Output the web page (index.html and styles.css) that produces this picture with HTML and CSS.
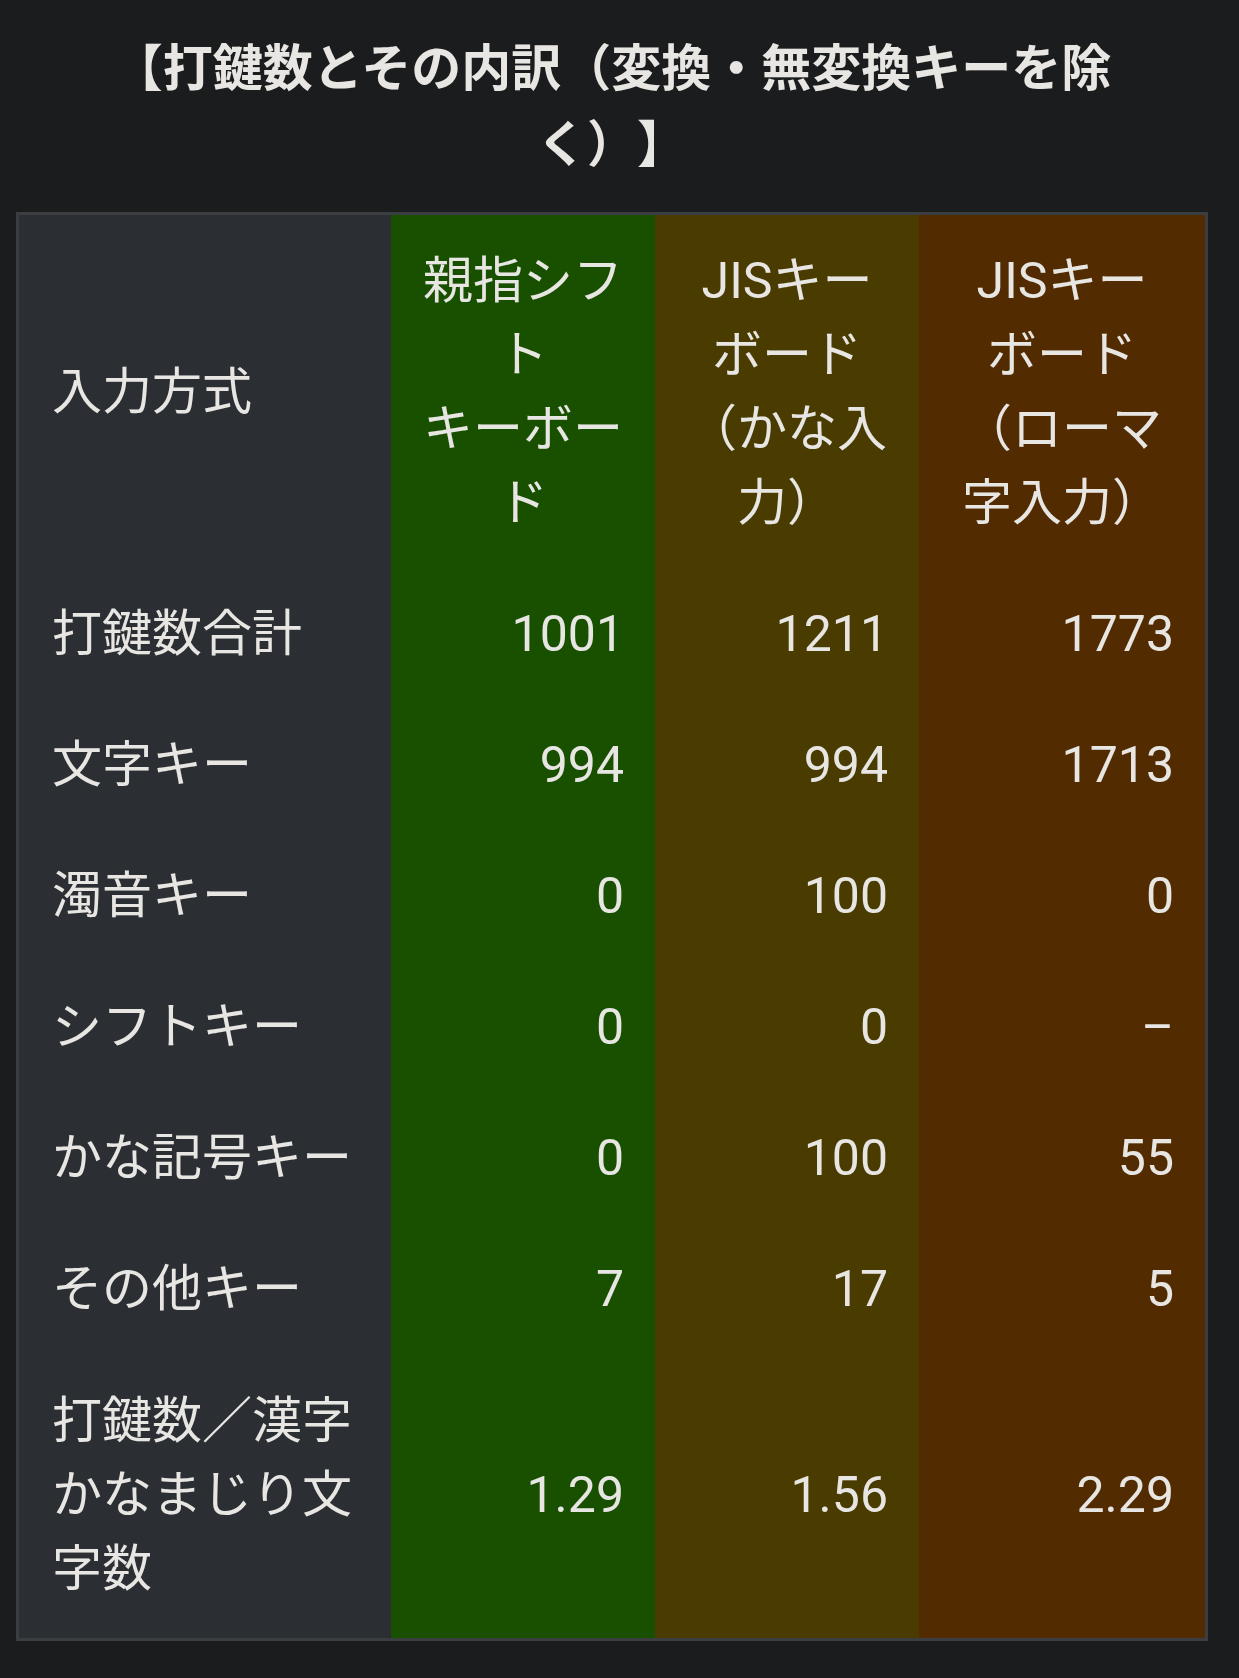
FILE: index.html
```html
<!DOCTYPE html>
<html lang="ja">
<head>
<meta charset="utf-8">
<title>打鍵数とその内訳</title>
<link rel="stylesheet" href="styles.css">
</head>
<body>
<h2 class="title">【打鍵数とその内訳（変換・無変換キーを除く）】</h2>
<div class="table-wrap">
<table class="stats">
<colgroup>
<col class="c-label">
<col class="c-oya">
<col class="c-kana">
<col class="c-roma">
</colgroup>
<thead>
<tr>
<th class="label">入力方式</th>
<th class="oya">親指シフ<br>ト<br>キーボー<br>ド</th>
<th class="kana">JISキー<br>ボード<br>（かな入<br>力）</th>
<th class="roma">JISキー<br>ボード<br>（ローマ<br>字入力）</th>
</tr>
</thead>
<tbody>
<tr><td class="label">打鍵数合計</td><td class="oya">1001</td><td class="kana">1211</td><td class="roma">1773</td></tr>
<tr><td class="label">文字キー</td><td class="oya">994</td><td class="kana">994</td><td class="roma">1713</td></tr>
<tr><td class="label">濁音キー</td><td class="oya">0</td><td class="kana">100</td><td class="roma">0</td></tr>
<tr><td class="label">シフトキー</td><td class="oya">0</td><td class="kana">0</td><td class="roma">–</td></tr>
<tr><td class="label">かな記号キー</td><td class="oya">0</td><td class="kana">100</td><td class="roma">55</td></tr>
<tr><td class="label">その他キー</td><td class="oya">7</td><td class="kana">17</td><td class="roma">5</td></tr>
<tr class="last"><td class="label">打鍵数／漢字<br>かなまじり文<br>字数</td><td class="oya">1.29</td><td class="kana">1.56</td><td class="roma">2.29</td></tr>
</tbody>
</table>
</div>
</body>
</html>
```

FILE: styles.css
```css
html, body {
  margin: 0;
  padding: 0;
  background: #1b1c1e;
}

body {
  color: #e8e6e3;
  font-family: Roboto, "Noto Sans CJK JP", sans-serif;
  padding: 31px 0 0 16px;
  width: 1192px;
  text-spacing-trim: space-all;
}

.title {
  margin: 0 auto 29px;
  width: 1030px;
  font-size: 50px;
  line-height: 76px;
  font-weight: 700;
  text-align: center;
}

.table-wrap {
  border: 3px solid #3b3e41;
  width: 1192px;
  box-sizing: border-box;
}

.stats {
  width: 100%;
  border-collapse: collapse;
  table-layout: fixed;
  font-size: 50px;
  line-height: 74px;
}

.c-label { width: 372px; }
.c-oya { width: 264px; }
.c-kana { width: 264px; }
.c-roma { width: 286px; }

.stats th,
.stats td {
  padding: 28.5px 31px;
  font-weight: 400;
  vertical-align: middle;
  white-space: nowrap;
}

.stats th {
  text-align: center;
}

.stats td {
  text-align: right;
}

.stats .last td {
  padding-top: 30px;
  padding-bottom: 32px;
}

.stats .label {
  text-align: left;
  padding-left: 33px;
  background: #2b2e32;
}

.stats .oya { background: #185000; }
.stats .kana { background: #4a3b00; }
.stats .roma { background: #522c00; }
```
